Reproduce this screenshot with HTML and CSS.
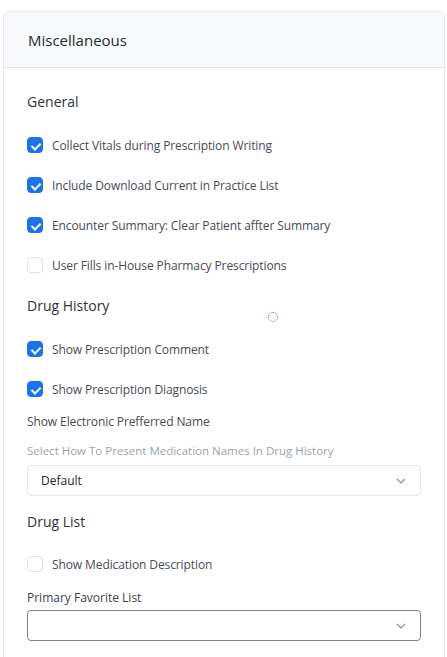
FILE: index.html
```html
<!DOCTYPE html>
<html lang="en">
<head>
    <meta charset="UTF-8">
    <meta name="viewport" content="width=device-width, initial-scale=1.0">
    <title>Miscellaneous</title>
    <link rel="stylesheet" href="styles.css">
</head>
<body>
    <div class="card">
        <div class="card-header">
            <h2>Miscellaneous</h2>
        </div>
        <div class="card-body">
            <h3 class="section-title">General</h3>
            <label class="check-row"><span class="box checked"></span>Collect Vitals during Prescription Writing</label>
            <label class="check-row"><span class="box checked"></span>Include Download Current in Practice List</label>
            <label class="check-row"><span class="box checked"></span>Encounter Summary: Clear Patient affter Summary</label>
            <label class="check-row"><span class="box"></span>User Fills in-House Pharmacy Prescriptions</label>

            <h3 class="section-title history">Drug History</h3>
            <label class="check-row"><span class="box checked"></span>Show Prescription Comment</label>
            <label class="check-row"><span class="box checked"></span>Show Prescription Diagnosis</label>
            <div class="plain-label">Show Electronic Prefferred Name</div>
            <div class="field-label muted">Select How To Present Medication Names In Drug History</div>
            <div class="select">
                <span>Default</span>
                <svg class="chevron" width="10" height="6" viewBox="0 0 10 6"><path d="M1 1l4 4 4-4" fill="none" stroke="#8a8f98" stroke-width="1.2"/></svg>
            </div>

            <h3 class="section-title list">Drug List</h3>
            <label class="check-row"><span class="box"></span>Show Medication Description</label>
            <div class="field-label favorite">Primary Favorite List</div>
            <div class="select dark">
                <span></span>
                <svg class="chevron" width="10" height="6" viewBox="0 0 10 6"><path d="M1 1l4 4 4-4" fill="none" stroke="#8a8f98" stroke-width="1.2"/></svg>
            </div>

            <div class="cursor-ring"></div>
        </div>
    </div>
</body>
</html>
```

FILE: styles.css
```css
* {
    margin: 0;
    padding: 0;
    box-sizing: border-box;
}

body {
    font-family: 'Open Sans', 'Noto Sans', sans-serif;
    background: #ffffff;
    color: #3c4048;
    padding: 11px 2px 0 3px;
}

.card {
    border: 1px solid #e6e8ec;
    border-radius: 6px;
    background: #fff;
    height: 660px;
}

.card-header {
    background: #f8f9fb;
    border-bottom: 1px solid #e4e6ea;
    border-radius: 6px 6px 0 0;
    height: 56px;
    display: flex;
    align-items: center;
    padding-left: 24px;
}

.card-header h2 {
    font-size: 15px;
    font-weight: 500;
    color: #252a33;
}

.card-body {
    position: relative;
    padding: 23px 23px 0 23px;
}

.section-title {
    font-size: 14px;
    font-weight: 500;
    color: #2f343c;
    height: 22px;
    line-height: 22px;
    margin-bottom: 12px;
}

.section-title.history {
    margin-top: 10px;
    margin-bottom: 12px;
}

.section-title.list {
    margin-top: 15px;
    margin-bottom: 11px;
}

.check-row {
    display: flex;
    align-items: center;
    gap: 9px;
    height: 40px;
    font-size: 12px;
    letter-spacing: -0.1px;
    color: #474b54;
}

.box {
    width: 16px;
    height: 16px;
    border: 1px solid #dfe2e6;
    border-radius: 4px;
    background: #fff;
    flex-shrink: 0;
}

.box.checked {
    background: #1a73e8;
    border-color: #1a73e8;
    position: relative;
}

.box.checked::after {
    content: "";
    position: absolute;
    left: 4.5px;
    top: 2.5px;
    width: 4px;
    height: 7px;
    border: solid #fff;
    border-width: 0 2px 2px 0;
    transform: rotate(45deg);
}

.plain-label {
    font-size: 12px;
    letter-spacing: -0.1px;
    color: #474b54;
    height: 22px;
    line-height: 22px;
    margin-top: 2px;
}

.field-label {
    font-size: 12px;
    color: #3c4048;
    margin-top: 9px;
    height: 18px;
    line-height: 18px;
    margin-bottom: 5px;
}

.field-label.muted {
    color: #9ea3ab;
    font-size: 11.5px;
}

.field-label.favorite {
    margin-top: 5px;
    margin-bottom: 3px;
}

.select {
    height: 31px;
    border: 1px solid #e6e8ec;
    border-radius: 4px;
    display: flex;
    align-items: center;
    justify-content: space-between;
    padding: 0 14px 0 13px;
    font-size: 12px;
    color: #22262d;
    font-weight: 500;
}

.select.dark {
    border-color: #7d828b;
}

.cursor-ring {
    position: absolute;
    left: 264px;
    top: 244px;
    width: 10px;
    height: 10px;
    border: 1px dotted #e0414a;
    border-radius: 50%;
}
```
